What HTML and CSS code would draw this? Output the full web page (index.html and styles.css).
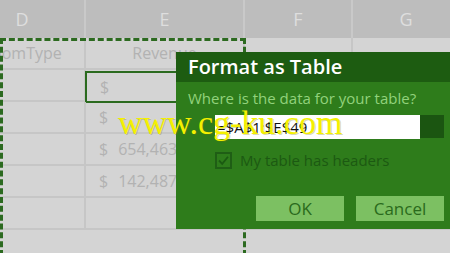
FILE: index.html
```html
<!DOCTYPE html>
<html lang="en">
<head>
  <meta charset="UTF-8">
  <title>Format as Table</title>
  <link rel="stylesheet" href="styles.css">
</head>
<body>

  <div class="sheet">
    <div class="row head">
      <div class="cell">D</div>
      <div class="cell">E</div>
      <div class="cell">F</div>
      <div class="cell">G</div>
    </div>
    <div class="row">
      <div class="cell center">RoomType</div>
      <div class="cell center">Revenue</div>
      <div class="cell"></div>
      <div class="cell"></div>
    </div>
    <div class="row">
      <div class="cell"></div>
      <div class="cell money active"><span>$</span></div>
      <div class="cell"></div>
      <div class="cell"></div>
    </div>
    <div class="row">
      <div class="cell"></div>
      <div class="cell money"><span>$</span></div>
      <div class="cell"></div>
      <div class="cell"></div>
    </div>
    <div class="row">
      <div class="cell"></div>
      <div class="cell money"><span>$</span><span>654,463.00</span></div>
      <div class="cell"></div>
      <div class="cell"></div>
    </div>
    <div class="row">
      <div class="cell"></div>
      <div class="cell money"><span>$</span><span>142,487.00</span></div>
      <div class="cell"></div>
      <div class="cell"></div>
    </div>
    <div class="row">
      <div class="cell"></div>
      <div class="cell"></div>
      <div class="cell"></div>
      <div class="cell"></div>
    </div>
  </div>

  <!-- marching ants around the copied range -->
  <div class="ants"></div>

  <div class="dialog">
    <div class="dialog-title">Format as Table</div>
    <div class="dialog-body">
      <div class="question">Where is the data for your table?</div>
      <div class="range">
        <div class="range-input">=$A$1:$E$49</div>
        <div class="range-btn"></div>
      </div>
      <label class="check">
        <span class="box">
          <svg width="13" height="13" viewBox="0 0 13 13"><path d="M2 6.5 L5.2 9.8 L11 2.8" fill="none" stroke="#1b5a12" stroke-width="1.8"/></svg>
        </span>
        My table has headers
      </label>
      <div class="buttons">
        <div class="btn">OK</div>
        <div class="btn">Cancel</div>
      </div>
    </div>
  </div>

  <div class="watermark">www.cg-ku.com</div>

</body>
</html>
```

FILE: styles.css
```css
* {
  margin: 0;
  padding: 0;
  box-sizing: border-box;
}

html, body {
  width: 450px;
  height: 253px;
  overflow: hidden;
  font-family: 'Open Sans', 'Noto Sans', sans-serif;
}

body {
  background: #d4d4d4;
  position: relative;
}

.sheet {
  margin-left: -40px;
  height: 253px;
  overflow: hidden;
}

.row {
  display: grid;
  grid-template-columns: 126px 159px 108px 108px;
  height: 32px;
}

.cell {
  border-right: 2px solid #c6c6c6;
  border-bottom: 2px solid #c6c6c6;
  color: #b2b2b2;
  font-size: 16px;
  display: flex;
  align-items: center;
  overflow: hidden;
  white-space: nowrap;
}

.row.head {
  height: 38px;
  background: #bdbdbd;
}

.row.head .cell {
  justify-content: center;
  color: #dedede;
  font-size: 18px;
  border-right-color: #c9c9c9;
  border-bottom: none;
}

.center {
  justify-content: center;
}

.money {
  padding-left: 13px;
  gap: 10px;
}

.active {
  border: 2px solid #2b6b1f;
  margin: 1px 0 -1px -1px;
}

.ants {
  position: absolute;
  left: 0;
  top: 38px;
  width: 246px;
  height: 218px;
  border: 3px dashed #2c6a20;
}

.dialog {
  position: absolute;
  left: 176px;
  top: 52px;
  right: 0;
  height: 177px;
  background: #2e7c1b;
}

.dialog-title {
  height: 30px;
  background: #1d5c11;
  color: #ffffff;
  font-size: 20px;
  font-weight: 600;
  line-height: 30px;
  padding-left: 12px;
}

.dialog-body {
  padding: 6px 6px 0 12px;
}

.question {
  color: #92d27c;
  font-size: 15px;
  line-height: 20px;
}

.range {
  display: flex;
  margin: 7px 0 0 27px;
  height: 24px;
}

.range-input {
  width: 205px;
  background: #ffffff;
  color: #111111;
  font-size: 15px;
  line-height: 24px;
  padding-left: 2px;
}

.range-btn {
  width: 24px;
  height: 23px;
  background: #1b5511;
}

.check {
  display: flex;
  align-items: center;
  gap: 8px;
  margin: 13px 0 0 27px;
  color: #1c5912;
  font-size: 15px;
  line-height: 17px;
}

.box {
  width: 17px;
  height: 17px;
  border: 2px solid #1f5e15;
  display: flex;
  align-items: center;
  justify-content: center;
}

.buttons {
  display: flex;
  justify-content: flex-end;
  gap: 12px;
  margin-top: 27px;
}

.btn {
  width: 88px;
  height: 25px;
  background: #7cc062;
  color: #2a6a1c;
  font-size: 17px;
  line-height: 25px;
  text-align: center;
}

.watermark {
  position: absolute;
  left: 118px;
  top: 104px;
  font-family: 'Liberation Serif', serif;
  font-size: 34px;
  color: #f4f000;
  text-shadow: 1px 1px 0 rgba(120, 120, 0, 0.3);
  pointer-events: none;
}
```
